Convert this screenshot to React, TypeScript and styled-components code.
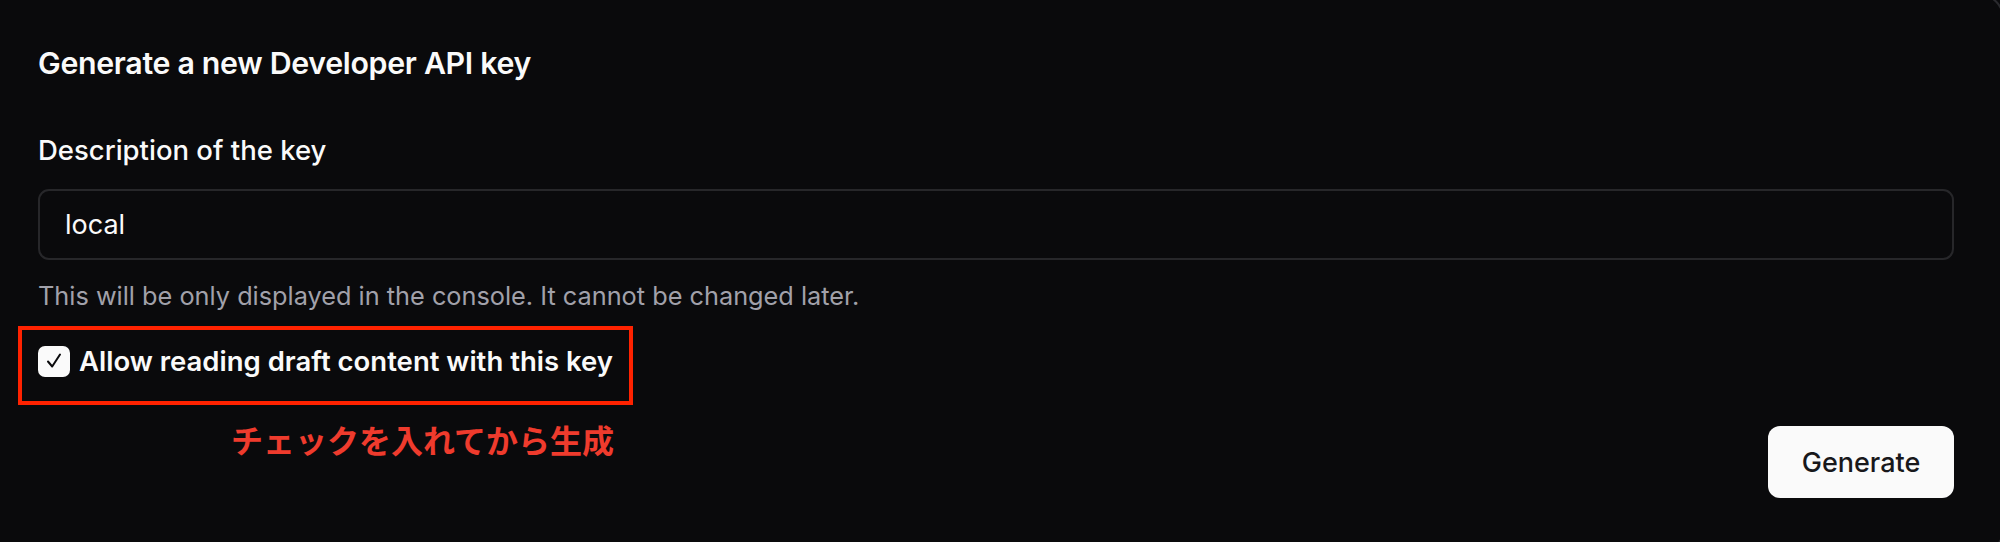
import React from "react";
import styled, {createGlobalStyle} from "styled-components";

const GlobalStyle = createGlobalStyle`
  html, body {
    margin: 0;
    padding: 0;
    background: #0a0a0c;
    overflow: hidden;
  }
  body {
    font-family: Inter, "Noto Sans", "Noto Sans CJK JP", sans-serif;
    color: #fafafa;
  }
`;

const Card = styled.div`
  margin: -6px -4px 0 -30px;
  height: 560px;
  box-sizing: border-box;
  border: 2px solid #2a2a2e;
  border-radius: 24px;
  background: #0a0a0c;
  padding: 45px 48px 0 66px;
  display: flex;
  flex-direction: column;
`;

const Title = styled.h2`
  margin: 0;
  font-size: 30.3px;
  line-height: 44px;
  font-weight: 600;
  letter-spacing: -0.01em;
`;

const Label = styled.label`
  margin-top: 47px;
  font-size: 27.5px;
  line-height: 36px;
  font-weight: 500;
`;

const Input = styled.input`
  margin-top: 21px;
  height: 71px;
  box-sizing: border-box;
  border: 2px solid #27272a;
  border-radius: 11px;
  background: transparent;
  color: #fafafa;
  padding: 0 25px;
  font-family: inherit;
  font-size: 27px;
  outline: none;
`;

const Helper = styled.p`
  margin: 20px 0 0;
  font-size: 25.3px;
  line-height: 32px;
  color: #a1a1aa;
`;

const Highlight = styled.div`
  align-self: flex-start;
  margin: 14px 0 0 -20px;
  border: 4px solid #ff2200;
  padding: 13px 16px 22px 16px;
  display: inline-flex;
  align-items: center;
  gap: 9px;
`;

const CheckBox = styled.span`
  width: 32px;
  height: 31px;
  border-radius: 7px;
  background: #fafafa;
  display: flex;
  align-items: center;
  justify-content: center;
`;

const CheckLabel = styled.span`
  font-size: 27.5px;
  line-height: 36px;
  font-weight: 600;
`;

const Footer = styled.div`
  margin-top: 21px;
  display: flex;
  justify-content: space-between;
  align-items: flex-start;
`;

const Note = styled.span`
  margin: -7px 0 0 193px;
  font-family: "Noto Sans CJK JP", sans-serif;
  font-size: 32px;
  line-height: 40px;
  font-weight: 700;
  color: #ef3b2d;
`;

const Button = styled.button`
  width: 186px;
  height: 72px;
  border: none;
  border-radius: 12px;
  background: #fafafa;
  color: #18181b;
  font-family: inherit;
  font-size: 27px;
  font-weight: 500;
`;

export default function App() {
    return (
        <>
            <GlobalStyle/>
            <Card>
                <Title>Generate a new Developer API key</Title>
                <Label>Description of the key</Label>
                <Input defaultValue="local"/>
                <Helper>This will be only displayed in the console. It cannot be changed later.</Helper>
                <Highlight>
                    <CheckBox>
                        <svg width="18" height="18" viewBox="0 0 18 18" fill="none">
                            <path d="M3 9.5 L7.2 14.5 L15 2.5" stroke="#0a0a0c" strokeWidth="2"
                                  strokeLinecap="round" strokeLinejoin="round"/>
                        </svg>
                    </CheckBox>
                    <CheckLabel>Allow reading draft content with this key</CheckLabel>
                </Highlight>
                <Footer>
                    <Note>チェックを入れてから生成</Note>
                    <Button>Generate</Button>
                </Footer>
            </Card>
        </>
    )
}
